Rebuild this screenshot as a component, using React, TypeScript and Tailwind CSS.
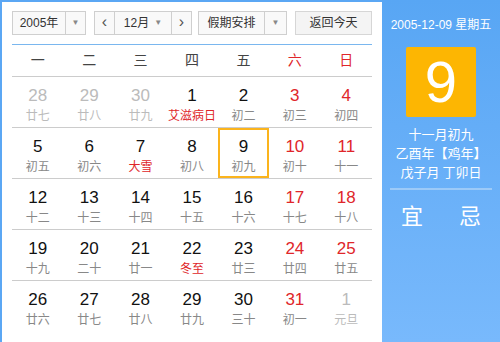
import React from "react";

type Day = {
  d: number;
  lunar: string;
  other?: boolean;
  fest?: boolean;
};

const weeks: Day[][] = [
  [
    { d: 28, lunar: "廿七", other: true },
    { d: 29, lunar: "廿八", other: true },
    { d: 30, lunar: "廿九", other: true },
    { d: 1, lunar: "艾滋病日", fest: true },
    { d: 2, lunar: "初二" },
    { d: 3, lunar: "初三" },
    { d: 4, lunar: "初四" },
  ],
  [
    { d: 5, lunar: "初五" },
    { d: 6, lunar: "初六" },
    { d: 7, lunar: "大雪", fest: true },
    { d: 8, lunar: "初八" },
    { d: 9, lunar: "初九" },
    { d: 10, lunar: "初十" },
    { d: 11, lunar: "十一" },
  ],
  [
    { d: 12, lunar: "十二" },
    { d: 13, lunar: "十三" },
    { d: 14, lunar: "十四" },
    { d: 15, lunar: "十五" },
    { d: 16, lunar: "十六" },
    { d: 17, lunar: "十七" },
    { d: 18, lunar: "十八" },
  ],
  [
    { d: 19, lunar: "十九" },
    { d: 20, lunar: "二十" },
    { d: 21, lunar: "廿一" },
    { d: 22, lunar: "冬至", fest: true },
    { d: 23, lunar: "廿三" },
    { d: 24, lunar: "廿四" },
    { d: 25, lunar: "廿五" },
  ],
  [
    { d: 26, lunar: "廿六" },
    { d: 27, lunar: "廿七" },
    { d: 28, lunar: "廿八" },
    { d: 29, lunar: "廿九" },
    { d: 30, lunar: "三十" },
    { d: 31, lunar: "初一" },
    { d: 1, lunar: "元旦", other: true },
  ],
];

const weekNames = ["一", "二", "三", "四", "五", "六", "日"];

const Caret = () => <span className="text-[8px] text-[#888]">▼</span>;

export default function App() {
  return (
    <div
      className="flex h-[342px] w-[500px] bg-[#5ba7f4]"
      style={{ fontFamily: '"Liberation Sans", "Noto Sans CJK SC", sans-serif' }}
    >
      <div className="ml-[2px] mt-[2px] h-[340px] w-[380px] bg-white px-[10px] pt-[9px]">
        {/* toolbar */}
        <div className="flex h-[24px] items-stretch text-[12px] text-[#333]">
          <div className="flex w-[74px] border border-[#cfcfcf] bg-[#f9f9f9]">
            <span className="flex w-[52px] items-center justify-center">2005年</span>
            <span className="flex flex-1 items-center justify-center border-l border-[#cfcfcf]">
              <Caret />
            </span>
          </div>
          <div className="ml-[8px] flex w-[98px] border border-[#cfcfcf] bg-[#f9f9f9]">
            <span className="flex w-[20px] items-center justify-center border-r border-[#cfcfcf] pb-[2px] text-[16px] text-[#555]">
              ‹
            </span>
            <span className="flex w-[56px] items-center justify-center gap-[5px]">
              12月 <Caret />
            </span>
            <span className="flex flex-1 items-center justify-center border-l border-[#cfcfcf] pb-[2px] text-[16px] text-[#555]">
              ›
            </span>
          </div>
          <div className="ml-[6px] flex w-[89px] border border-[#cfcfcf] bg-[#f9f9f9]">
            <span className="flex w-[65px] items-center justify-center">假期安排</span>
            <span className="flex flex-1 items-center justify-center border-l border-[#cfcfcf]">
              <Caret />
            </span>
          </div>
          <div className="ml-[8px] flex w-[77px] items-center justify-center border border-[#d6d6d6] bg-[#f4f4f4]">
            返回今天
          </div>
        </div>

        <div className="mt-[9px] border-t border-[#7ab7ef]" />

        {/* week header */}
        <div className="grid h-[32px] grid-cols-7 items-center border-b border-[#cccccc] text-[14px]">
          {weekNames.map((w, i) => (
            <div
              key={w}
              className={`text-center ${i >= 5 ? "text-[#e0262a]" : "text-[#444]"}`}
            >
              {w}
            </div>
          ))}
        </div>

        {/* days */}
        {weeks.map((week, r) => (
          <div
            key={r}
            className={`grid h-[51px] grid-cols-7 ${r < 4 ? "border-b border-[#cccccc]" : ""}`}
          >
            {week.map((day, c) => {
              const selected = r === 1 && c === 4;
              const weekend = c >= 5;
              const numColor = day.other
                ? "text-[#bbbbbb]"
                : weekend
                ? "text-[#e0262a]"
                : "text-[#111]";
              const lunarColor = day.fest
                ? "text-[#e0262a]"
                : day.other
                ? "text-[#bbbbbb]"
                : "text-[#888]";
              return (
                <div
                  key={c}
                  className={`flex flex-col items-center ${
                    selected ? "border-2 border-[#fbb41d] pt-[8px]" : "pt-[10px]"
                  }`}
                >
                  <span className={`text-[17px] leading-[18px] ${numColor}`}>{day.d}</span>
                  <span
                    className={`mt-[2px] text-[12px] leading-[16px] ${lunarColor}`}
                    style={{ fontFamily: '"Noto Sans CJK SC", sans-serif' }}
                  >
                    {day.lunar}
                  </span>
                </div>
              );
            })}
          </div>
        ))}
      </div>

      {/* side panel */}
      <div className="flex flex-1 flex-col items-center bg-gradient-to-b from-[#58a6f4] to-[#78b9fc] text-white">
        <div className="mt-[17px] text-[12px] leading-[16px]">2005-12-09 星期五</div>
        <div className="mt-[14px] flex h-[70px] w-[70px] items-center justify-center rounded-[2px] bg-[#fdb602] text-[58px] leading-none">
          9
        </div>
        <div
          className="mt-[7px] flex flex-col items-center text-[13px] leading-[19px]"
          style={{ fontFamily: '"Noto Sans CJK SC", sans-serif' }}
        >
          <span>十一月初九</span>
          <span>乙酉年【鸡年】</span>
          <span>戊子月 丁卯日</span>
        </div>
        <div className="mt-[7px] w-[102px] border-t-2 border-[#9ccaf8]" />
        <div
          className="mt-[10px] flex w-[80px] justify-between text-[22px] leading-[28px]"
          style={{ fontFamily: '"Noto Sans CJK SC", sans-serif' }}
        >
          <span>宜</span>
          <span>忌</span>
        </div>
      </div>
    </div>
  );
}
